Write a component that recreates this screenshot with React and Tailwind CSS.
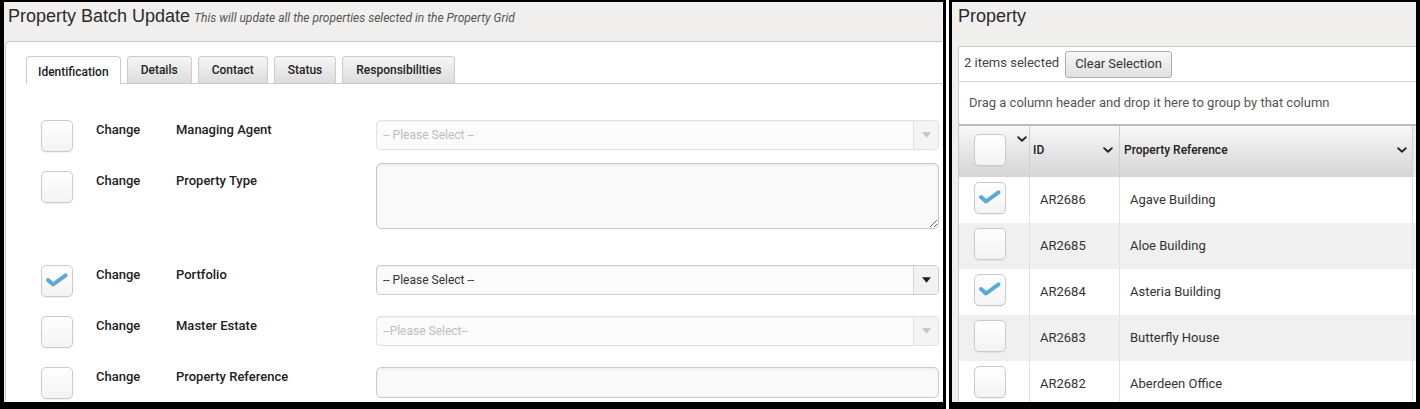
import React from "react";

const Chevron = () => (
  <svg viewBox="0 0 10 6" width="10" height="6" className="shrink-0">
    <path d="M1.2 1.2 L5 4.8 L8.8 1.2" fill="none" stroke="#2b2b2b" strokeWidth="1.9" strokeLinecap="round" strokeLinejoin="round" />
  </svg>
);

const Box = ({ checked }) => (
  <div className="w-[32px] h-[32px] shrink-0 rounded-[5px] border border-[#cacaca] bg-linear-to-b from-white to-[#f3f3f3] shadow-[0_1px_1px_rgba(0,0,0,0.06)]">
    {checked && (
      <svg viewBox="0 0 30 30" width="30" height="30">
        <path d="M6 14 L11 18.5 L23.5 9.3" fill="none" stroke="#5aaad6" strokeWidth="4" strokeLinecap="round" strokeLinejoin="round" />
      </svg>
    )}
  </div>
);

const Triangle = ({ disabled }) => (
  <svg viewBox="0 0 10 6" width="9" height="6">
    <polygon points="0,0 10,0 5,6" fill={disabled ? "#c4c4c4" : "#1e1e1e"} />
  </svg>
);

const Select = ({ text, disabled }) => (
  <div
    className={
      disabled
        ? "flex h-[30px] w-full rounded-[4px] border border-[#e2e2e2] bg-[#fbfbfb] overflow-hidden shadow-[inset_0_1px_2px_rgba(0,0,0,0.04)]"
        : "flex h-[30px] w-full rounded-[4px] border border-[#cccccc] bg-[#fbfbfb] overflow-hidden shadow-[inset_0_1px_2px_rgba(0,0,0,0.06)]"
    }
  >
    <div className={disabled ? "flex-1 flex items-center pl-[6px] text-[12px] text-[#bdbdbd]" : "flex-1 flex items-center pl-[6px] text-[12px] text-[#333]"}>
      {text}
    </div>
    <div className={disabled ? "w-[25px] border-l border-[#e2e2e2] bg-[#f4f4f4] flex items-center justify-center" : "w-[25px] border-l border-[#d4d4d4] bg-[#f2f2f2] flex items-center justify-center"}>
      <Triangle disabled={disabled} />
    </div>
  </div>
);

const TextInput = () => (
  <div className="h-[31px] w-full rounded-[5px] border border-[#cccccc] bg-[#f9f9f9] shadow-[inset_0_1px_3px_rgba(0,0,0,0.07)]" />
);

const Label = ({ children, className = "" }) => (
  <div className={"text-[13px] font-medium text-[#222] leading-[20px] " + className}>{children}</div>
);

const rows = [
  { id: "AR2686", name: "Agave Building", checked: true },
  { id: "AR2685", name: "Aloe Building", checked: false },
  { id: "AR2684", name: "Asteria Building", checked: true },
  { id: "AR2683", name: "Butterfly House", checked: false },
  { id: "AR2682", name: "Aberdeen Office", checked: false },
];

export default function App() {
  return (
    <div className="w-[1420px] h-[409px] flex bg-white overflow-hidden font-['Roboto','Liberation_Sans',sans-serif] text-[#333]">
      {/* LEFT PANEL */}
      <div className="w-[946px] h-[409px] shrink-0 border-t-[2px] border-l-[4px] border-r-[3px] border-b-[7px] border-black bg-[#f0efee] flex flex-col overflow-hidden">
        <div className="h-[39px] shrink-0 flex items-baseline gap-[4px] pl-[4px] pt-[2px]">
          <span className="text-[18px] leading-[24px] text-[#2b2b2b] font-['Liberation_Sans',Arial,sans-serif]">Property Batch Update</span>
          <span className="text-[12px] italic text-[#555]">This will update all the properties selected in the Property Grid</span>
        </div>
        <div className="flex-1 ml-[1px] bg-white border-l border-t border-[#cbcbcb] rounded-tl-[5px] pl-[20px] pt-[14px] flex flex-col">
          {/* Tabs */}
          <div className="flex items-end gap-[6px] h-[28px] border-b border-[#cbcbcb]">
            <div className="h-[28px] mb-[-1px] px-[11px] pt-[3px] flex items-center bg-white border border-b-0 border-[#cbcbcb] rounded-t-[4px] text-[12px] font-medium text-[#222]">
              Identification
            </div>
            {["Details", "Contact", "Status", "Responsibilities"].map((t) => (
              <div
                key={t}
                className="h-[27px] px-[13px] flex items-center bg-linear-to-b from-[#f6f6f6] to-[#dcdcdc] border border-b-0 border-[#cbcbcb] rounded-t-[4px] text-[12px] font-medium text-[#222]"
              >
                {t}
              </div>
            ))}
          </div>

          {/* Form */}
          <div className="pl-[15px] flex flex-col">
            <div className="mt-[36px] grid grid-cols-[55px_80px_200px_563px] items-start">
              <Box />
              <Label>Change</Label>
              <Label>Managing Agent</Label>
              <Select text="-- Please Select --" disabled />
            </div>
            <div className="mt-[11px] grid grid-cols-[55px_80px_200px_563px] items-start">
              <div className="mt-[8px]"><Box /></div>
              <Label className="mt-[8px]">Change</Label>
              <Label className="mt-[8px]">Property Type</Label>
              <textarea className="h-[66px] w-full rounded-[5px] border border-[#c8c8c8] bg-[#f9f9f9] shadow-[inset_0_1px_3px_rgba(0,0,0,0.08)] outline-none" />
            </div>
            <div className="mt-[36px] grid grid-cols-[55px_80px_200px_563px] items-start">
              <Box checked />
              <Label>Change</Label>
              <Label>Portfolio</Label>
              <Select text="-- Please Select --" />
            </div>
            <div className="mt-[19px] grid grid-cols-[55px_80px_200px_563px] items-start">
              <Box />
              <Label>Change</Label>
              <Label>Master Estate</Label>
              <Select text="--Please Select--" disabled />
            </div>
            <div className="mt-[19px] grid grid-cols-[55px_80px_200px_563px] items-start">
              <Box />
              <Label>Change</Label>
              <Label>Property Reference</Label>
              <TextInput />
            </div>
          </div>
        </div>
      </div>

      {/* RIGHT PANEL */}
      <div className="w-[471px] h-[409px] shrink-0 ml-[3px] border-t-[2px] border-l-[3px] border-r-[4px] border-b-[7px] border-black bg-[#f0efee] flex flex-col overflow-hidden">
        <div className="h-[44px] shrink-0 pl-[6px] pt-[2px]">
          <span className="text-[18px] leading-[24px] text-[#2b2b2b] font-['Liberation_Sans',Arial,sans-serif]">Property</span>
        </div>
        <div className="flex-1 ml-[6px] bg-white border-l border-t border-[#cbcbcb] rounded-tl-[4px] flex flex-col">
          <div className="h-[35px] shrink-0 flex items-center gap-[6px] pl-[5px] border-b border-[#d6d6d6]">
            <span className="text-[13px] text-[#444] mb-[2px]">2 items selected</span>
            <div className="h-[27px] px-[9px] flex items-center rounded-[3px] border border-[#adadad] bg-linear-to-b from-[#f7f7f7] to-[#e1e1e1] text-[13px] text-[#333]">
              Clear Selection
            </div>
          </div>
          <div className="h-[42px] shrink-0 flex items-center pl-[10px] text-[13px] text-[#555]">
            Drag a column header and drop it here to group by that column
          </div>
          {/* Grid header */}
          <div className="h-[53px] shrink-0 grid grid-cols-[71px_90px_1fr_3px] border-t-[2px] border-[#bcbcbc] bg-linear-to-b from-[#f8f8f8] to-[#d5d5d5]">
            <div className="flex items-start border-r border-[#cfcfcf]">
              <div className="ml-[15px] mt-[8px]"><Box /></div>
              <div className="ml-[11px] mt-[10px]"><Chevron /></div>
            </div>
            <div className="flex items-center pl-[3px] pr-[6px] pb-[3px] border-r border-[#cfcfcf]">
              <span className="flex-1 text-[12px] font-medium text-[#222]">ID</span>
              <Chevron />
            </div>
            <div className="flex items-center pl-[4px] pr-[5px] pb-[3px] border-r border-[#cfcfcf]">
              <span className="flex-1 text-[12px] font-medium text-[#222]">Property Reference</span>
              <Chevron />
            </div>
            <div className="bg-[#ececec]" />
          </div>
          {/* Grid rows */}
          {rows.map((r, i) => (
            <div
              key={r.id}
              className={
                i % 2 === 0
                  ? "h-[46px] shrink-0 grid grid-cols-[71px_90px_1fr_3px] bg-white"
                  : "h-[46px] shrink-0 grid grid-cols-[71px_90px_1fr_3px] bg-[#f0f0f0]"
              }
            >
              <div className="pl-[15px] pt-[5px] border-r border-[#e2e2e2]">
                <Box checked={r.checked} />
              </div>
              <div className="flex items-center pl-[10px] text-[13px] text-[#333] border-r border-[#e2e2e2]">{r.id}</div>
              <div className="flex items-center pl-[10px] text-[13px] text-[#333] border-r border-[#e2e2e2]">{r.name}</div>
              <div />
            </div>
          ))}
        </div>
      </div>
    </div>
  );
}
